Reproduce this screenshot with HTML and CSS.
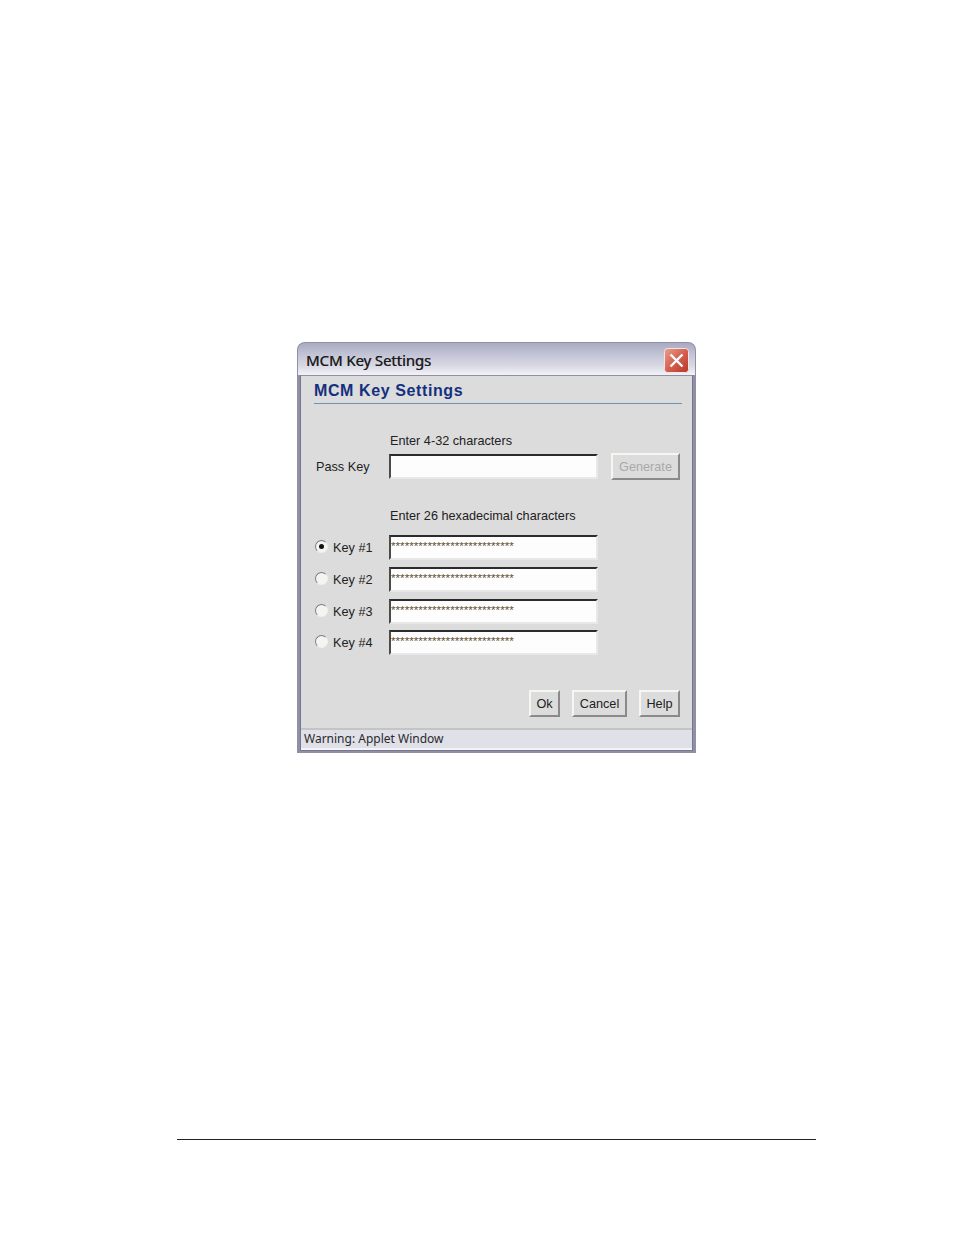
FILE: index.html
```html
<!DOCTYPE html>
<html>
<head>
	<meta charset="UTF-8">
	<title>MCM Key Settings</title>
	<link rel="stylesheet" href="styles.css">
</head>
<body>
	<div class="window">
		<div class="titlebar">
			<span class="title">MCM Key Settings</span>
			<span class="close">
				<svg width="25" height="25" viewBox="0 0 25 25">
					<defs>
						<linearGradient id="closebg" x1="0" y1="0" x2="1" y2="1">
							<stop offset="0" stop-color="#e8a090"/>
							<stop offset="0.5" stop-color="#d5604f"/>
							<stop offset="1" stop-color="#b8352a"/>
						</linearGradient>
					</defs>
					<rect x="0.5" y="0.5" width="24" height="24" rx="3" fill="url(#closebg)" stroke="#f3e4e0"/>
					<path d="M6.5 6.5 L18.5 18.5 M18.5 6.5 L6.5 18.5" stroke="#fff" stroke-width="2.4" fill="none"/>
				</svg>
			</span>
		</div>
		<div class="panel">
			<div class="content">
				<h1>MCM Key Settings</h1>

				<p class="hint hint_first">Enter 4-32 characters</p>
				<div class="row">
					<label class="pass_label">Pass Key</label>
					<div class="field"></div>
					<button class="btn generate" disabled>Generate</button>
				</div>

				<p class="hint hint_second">Enter 26 hexadecimal characters</p>
				<div class="row key_row">
					<span class="radio checked"></span>
					<label class="key_label">Key #1</label>
					<div class="field">***************************</div>
				</div>
				<div class="row key_row">
					<span class="radio"></span>
					<label class="key_label">Key #2</label>
					<div class="field">***************************</div>
				</div>
				<div class="row key_row third">
					<span class="radio"></span>
					<label class="key_label">Key #3</label>
					<div class="field">***************************</div>
				</div>
				<div class="row key_row last">
					<span class="radio"></span>
					<label class="key_label">Key #4</label>
					<div class="field">***************************</div>
				</div>

				<div class="actions">
					<button class="btn ok">Ok</button>
					<button class="btn cancel">Cancel</button>
					<button class="btn help">Help</button>
				</div>
			</div>
			<div class="status">Warning: Applet Window</div>
		</div>
	</div>
	<div class="page_rule"></div>
</body>
</html>
```

FILE: styles.css
```css
html, body { margin: 0; padding: 0; background: #fff; }
body { height: 1235px; padding-top: 342px; box-sizing: border-box; font-family: "Liberation Sans", Arial, sans-serif; color: #222; overflow: hidden; }

/* window */
.window { width: 399px; height: 411px; margin-left: 297px; box-sizing: border-box; background: #8f90a8; border-radius: 8px 8px 0 0; padding: 1px; display: flex; flex-direction: column; }
.titlebar { height: 32px; flex: none; display: flex; align-items: center; justify-content: space-between; padding: 0 6px 0 8px; border-radius: 7px 7px 0 0; background: linear-gradient(#a9aac1 0%, #bfc0d3 30%, #d8d8e4 70%, #f2f2f6 100%); }
.title { font-family: "Noto Sans", sans-serif; font-size: 15px; color: #1c1c1c; letter-spacing: -0.1px; position: relative; top: 1px; text-shadow: 0.3px 0 0 #444; }
.close { width: 25px; height: 25px; display: block; position: relative; top: 1px; }
.close svg { display: block; }

.panel { flex: 1; margin: 0 2px 1px; border: 1px solid #77778f; border-top-color: #8f90a8; background: #dcdcdc; display: flex; flex-direction: column; }
.content { flex: 1; padding: 0 10px 0 13px; }

h1 { margin: 0; padding: 5px 0 3px; font-size: 16px; line-height: 19px; font-weight: bold; color: #14307e; letter-spacing: 0.6px; border-bottom: 1px solid #7292b4; }

.hint { margin: 0; font-size: 12.7px; line-height: 14px; padding-left: 76px; color: #222; }
.hint_first { padding-top: 30px; padding-bottom: 6px; }
.hint_second { padding-top: 30px; padding-bottom: 12px; }

.row { display: flex; align-items: center; height: 25px; }
.pass_label { width: 75px; padding-left: 2px; box-sizing: border-box; font-size: 12.7px; }
.field { width: 209px; height: 25px; box-sizing: border-box; background: #fdfdfd; border: 2px solid #e8e8e8; border-top-color: #2b2b2b; border-left-color: #4a4a4a; font-size: 11.7px; line-height: 17px; color: #5d4b2e; overflow: hidden; white-space: nowrap; }

.key_row { margin-bottom: 7px; }
.key_row.third { margin-bottom: 6px; }
.key_row.last { margin-bottom: 0; }
.radio { width: 13px; height: 13px; flex: none; box-sizing: border-box; border-radius: 50%; margin: 0 5px 2px 1px; background: #f4f4f0; border: 1px solid #7d7d7d; border-right-color: #f0f0ec; border-bottom-color: #f0f0ec; position: relative; }
.radio.checked:after { content: ""; position: absolute; left: 3px; top: 3px; width: 5px; height: 5px; border-radius: 50%; background: #111; }
.key_label { width: 56px; font-size: 12.7px; }

.btn { display: block; height: 27px; box-sizing: border-box; padding: 0; font-family: "Liberation Sans", sans-serif; font-size: 12.7px; background: #dcdcdc; border: 2px solid #f6f6f2; border-right-color: #8a8a8a; border-bottom-color: #8a8a8a; color: #222; }
.btn.generate { width: 69px; margin-left: 13px; color: #a9a9a9; }

.actions { display: flex; justify-content: flex-end; gap: 12px; padding-top: 35px; margin-right: 2px; }
.ok { width: 31px; }
.cancel { width: 55px; }
.help { width: 41px; }

.status { height: 22px; flex: none; box-sizing: border-box; border-top: 2px solid #c4c4c4; border-bottom: 2px solid #f4f4f4; background: #e0e0e8; font-family: "Noto Sans", sans-serif; font-size: 12px; line-height: 18px; padding-left: 3px; color: #2a2a2a; }

.page_rule { height: 1px; background: #222; margin: 386px 138px 0 177px; }
```
